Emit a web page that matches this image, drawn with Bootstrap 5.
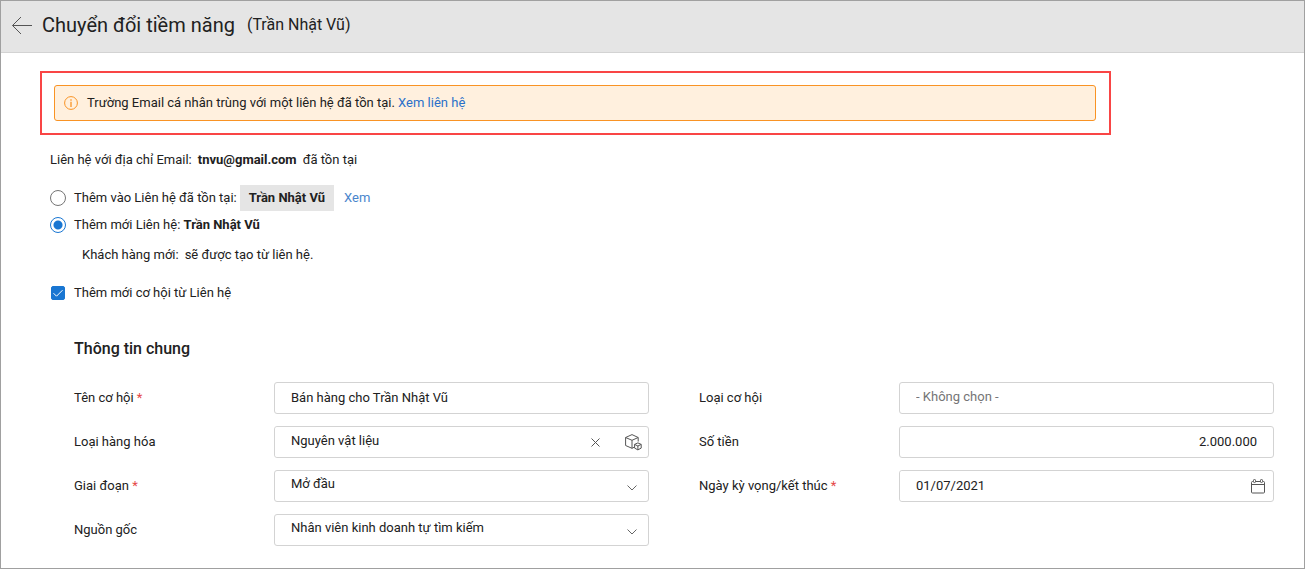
<!DOCTYPE html>
<html lang="vi">
<head>
<meta charset="utf-8">
<meta name="viewport" content="width=device-width, initial-scale=1">
<title>Chuyển đổi tiềm năng</title>
<link href="https://cdn.jsdelivr.net/npm/bootstrap@5.3.0/dist/css/bootstrap.min.css" rel="stylesheet">
<style>
  body { font-family: Roboto, "Liberation Sans", sans-serif; font-size: 13px; line-height: 20px; color: #212121; background: #fff; }
  a { color: #2b70c9; text-decoration: none; }
  .page { min-height: 100vh; border: 1px solid #a0a0a0; }
  .page-head { height: 52px; padding: 0 9px 3px; border-bottom: 1px solid #d3d3d3; background: #e5e5e5; }
  .page-head h1 { font-size: 20px; line-height: 24px; font-weight: 400; margin: 0 12px 0 10px; }
  .person { font-size: 16px; line-height: 24px; }
  .page-body { padding: 18px 30px 22px 49px; }
  .callout { max-width: 1071px; margin: 0 0 15px -10px; padding: 12px 13px 12px 12px; border: 2px solid #f94545; }
  .notice { height: 36px; padding: 0 9px; gap: 9px; background: #fff0de; border: 1px solid #f99324; border-radius: 3px; }
  .info { color: #f99324; }
  .spaced { column-gap: 6px; }
  .choice { gap: 8px; }
  .form-check-input.tick { width: 16px; height: 16px; margin: 0; border-color: #757575; flex: none; box-shadow: none; }
  .form-check-input.tick:checked { border-color: #1976d2; }
  .tick[type=radio]:checked { background: #fff radial-gradient(circle, #1976d2 4px, #fff 5px); }
  .form-check-input.tick[type=checkbox] { width: 14px; height: 14px; margin: 0 1px; border-radius: 2px; }
  .tick[type=checkbox]:checked { background-color: #1976d2; background-size: 14px; background-image: url("data:image/svg+xml,%3Csvg xmlns='http://www.w3.org/2000/svg' viewBox='0 0 14 14'%3E%3Cpath d='M2.5 7.2l3 3 6-6' fill='none' stroke='%23fff'/%3E%3C/svg%3E"); }
  .match { gap: 10px; margin-left: -5px; }
  .match a { color: #4a86cc; }
  .chip { padding: 3px 9px; background: #e5e5e5; }
  .choice-list { padding-top: 15px; }
  .note { padding: 6px 0 0 32px; margin-bottom: 18px; }
  .general { padding: 36px 0 0 24px; }
  .general h2 { font-size: 16px; line-height: 20px; font-weight: 500; margin-bottom: 23px; }
  .fields { display: grid; grid-template-columns: 1fr 1fr; column-gap: 50px; }
  .field-stack { gap: 12px; }
  .field-row { display: grid; grid-template-columns: 200px 1fr; align-items: center; }
  .req { color: #e54848; }
  .box { height: 32px; padding: 0 16px 2px; font-size: 13px; line-height: 20px; color: #212121; border: 1px solid #d3d3d3; border-radius: 3px; background-color: #fff; }
  .box::placeholder { color: #757575; }
  .box.high { padding-bottom: 4px; }
  select.box { background-image: url("data:image/svg+xml,%3Csvg xmlns='http://www.w3.org/2000/svg' viewBox='0 0 10 6'%3E%3Cpath d='M.5.5L5 5 9.500.5' fill='none' stroke='%23555' stroke-width='.9'/%3E%3C/svg%3E"); background-size: 10px 6px; background-position: right 11px top 14px; padding-right: 32px; }
  .combo { border: 1px solid #d3d3d3; border-radius: 3px; height: 32px; }
  .combo .box { border: 0; height: 30px; min-width: 0; }
  .icon-btn { border: 0; padding: 0; background: none; color: #555; display: flex; align-items: center; justify-content: center; }
  .icon-btn svg, .notice svg { display: block; fill: none; stroke: currentColor; flex: none; }
  .combo .icon-btn { width: 30px; flex: none; }
  .combo .clear-btn { width: 46px; padding-top: 1px; }
  @media (max-width: 900px) { .fields { grid-template-columns: 1fr; row-gap: 12px; } }
</style>
</head>
<body>
<div class="page">
  <header class="page-head d-flex align-items-center">
    <button type="button" class="icon-btn" aria-label="Quay lại">
      <svg width="22" height="18" viewBox="0 0 22 18"><path d="M22 9.500H2.500M11 1L2.500 9.500 11 18"/></svg>
    </button>
    <h1>Chuyển đổi tiềm năng</h1>
    <span class="person">(Trần Nhật Vũ)</span>
  </header>

  <main class="page-body">
    <div class="callout">
      <div class="notice d-flex align-items-center" role="alert">
        <svg class="info" width="14" height="14" viewBox="0 0 14 14"><circle cx="7" cy="7" r="6.400"/><path d="M7 5.800V11M7 3.200v1.500" stroke-width="1.300"/></svg>
        <span>Trường Email cá nhân trùng với một liên hệ đã tồn tại. <a href="#">Xem liên hệ</a></span>
      </div>
    </div>

    <p class="spaced mb-0 d-flex flex-wrap"><span>Liên hệ với địa chỉ Email:</span> <b>tnvu@gmail.com</b> <span>đã tồn tại</span></p>

    <div class="choice-list">
      <div class="d-flex align-items-center choice">
        <input class="form-check-input tick" type="radio" name="contact" id="old">
        <label for="old">Thêm vào Liên hệ đã tồn tại:</label>
        <span class="match d-flex align-items-center"><b class="chip">Trần Nhật Vũ</b><a href="#">Xem</a></span>
      </div>
      <div class="d-flex align-items-center choice py-1">
        <input class="form-check-input tick" type="radio" name="contact" id="new" checked>
        <label for="new">Thêm mới Liên hệ: <b>Trần Nhật Vũ</b></label>
      </div>
      <p class="note spaced d-flex"><span>Khách hàng mới:</span> <span>sẽ được tạo từ liên hệ.</span></p>
      <div class="d-flex align-items-center choice">
        <input class="form-check-input tick" type="checkbox" id="deal" checked>
        <label for="deal">Thêm mới cơ hội từ Liên hệ</label>
      </div>
    </div>

    <section class="general">
      <h2>Thông tin chung</h2>
      <form class="fields">
        <div class="field-stack d-flex flex-column">
          <div class="field-row">
            <label for="name">Tên cơ hội <span class="req">*</span></label>
            <input class="form-control box" id="name" type="text" value="Bán hàng cho Trần Nhật Vũ">
          </div>
          <div class="field-row">
            <label for="goods">Loại hàng hóa</label>
            <div class="combo d-flex">
              <input class="form-control box high" id="goods" type="text" value="Nguyên vật liệu">
              <button type="button" class="icon-btn clear-btn" aria-label="Xóa"><svg width="9" height="9" viewBox="0 0 9 9"><path d="M.5.5l8 8M8.500.5l-8 8"/></svg></button>
              <button type="button" class="icon-btn" aria-label="Chọn hàng hóa"><svg width="17" height="17" viewBox="0 0 17 17"><path d="M9 13.300L7 14.300.6 11.500V3.500L7 .6l6.200 2.900v4M.6 3.500L7 6.300l6.200-2.800M7 6.300v8"/><path d="M12.900 8.900l3.300 1.500v3.700l-3.300 1.800-3.300-1.800v-3.700zM9.600 10.400l3.300 1.600 3.300-1.600M12.900 12v3.900"/></svg></button>
            </div>
          </div>
          <div class="field-row">
            <label for="stage">Giai đoạn <span class="req">*</span></label>
            <select class="form-select box high" id="stage"><option>Mở đầu</option></select>
          </div>
          <div class="field-row">
            <label for="source">Nguồn gốc</label>
            <select class="form-select box high" id="source"><option>Nhân viên kinh doanh tự tìm kiếm</option></select>
          </div>
        </div>
        <div class="field-stack d-flex flex-column">
          <div class="field-row">
            <label for="kind">Loại cơ hội</label>
            <input class="form-control box high" id="kind" type="text" placeholder="- Không chọn -">
          </div>
          <div class="field-row">
            <label for="amount">Số tiền</label>
            <input class="form-control box text-end" id="amount" type="text" inputmode="numeric" value="2.000.000">
          </div>
          <div class="field-row">
            <label for="due">Ngày kỳ vọng/kết thúc <span class="req">*</span></label>
            <div class="combo d-flex">
              <input class="form-control box" id="due" type="text" value="01/07/2021">
              <button type="button" class="icon-btn" aria-label="Chọn ngày"><svg width="14" height="15" viewBox="0 0 14 15"><path d="M2 2.500H1.500a1 1 0 0 0-1 1v9.500a1 1 0 0 0 1 1h11a1 1 0 0 0 1-1V3.500a1 1 0 0 0-1-1H12M4.500 2.500h5M.5 5.500h13"/><rect x="2.500" y=".5" width="2" height="3" rx=".8"/><rect x="9.500" y=".5" width="2" height="3" rx=".8"/></svg></button>
            </div>
          </div>
        </div>
      </form>
    </section>
  </main>
</div>
<script src="https://cdn.jsdelivr.net/npm/bootstrap@5.3.0/dist/js/bootstrap.bundle.min.js"></script>
</body>
</html>
